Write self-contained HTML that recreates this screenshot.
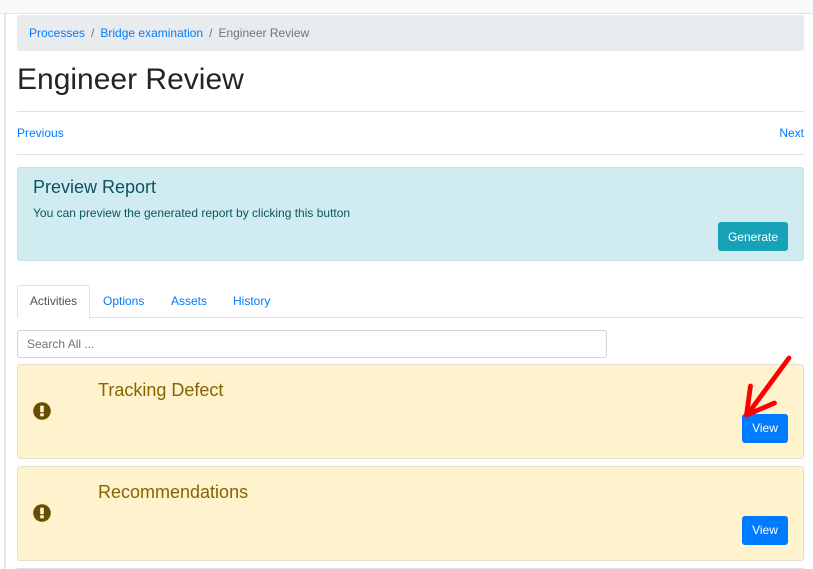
<!DOCTYPE html>
<html>
<head>
<meta charset="utf-8">
<style>
html,body{margin:0;padding:0;background:#fff;}
body{width:813px;height:569px;overflow:hidden;position:relative;font-family:"Liberation Sans",sans-serif;font-size:12px;color:#212529;}
.abs{position:absolute;white-space:nowrap;}
a{color:#007bff;text-decoration:none;}
.card{position:absolute;left:17px;width:785px;height:93px;background:#fff3cd;border:1px solid #e3e0d2;border-radius:3px;}
.title{position:absolute;left:80px;font-size:18px;line-height:22px;color:#856404;white-space:nowrap;}
.btn{position:absolute;left:724px;width:46px;height:29px;background:#007bff;border-radius:3px;color:#fff;text-align:center;line-height:28px;font-size:12px;}
.ico{position:absolute;left:15px;width:18px;height:18px;}
</style>
</head>
<body>
<div class="abs" style="left:0;top:0;width:813px;height:13px;background:#f8f9fa;border-bottom:1px solid #e3e4e6;"></div>
<div class="abs" style="left:4px;top:14px;width:2px;height:555px;background:#e4e5e7;"></div>

<div class="abs" style="left:17px;top:15px;width:787px;height:36px;background:#e9ecef;border-radius:3px;"></div>
<div class="abs" style="left:29px;top:26px;line-height:15px;color:#6c757d;"><a href="#">Processes</a><span style="margin:0 6px;">/</span><a href="#">Bridge examination</a><span style="margin:0 6px;">/</span>Engineer Review</div>

<div class="abs" style="left:17px;top:62px;font-size:30px;line-height:36px;color:#212529;">Engineer Review</div>
<div class="abs" style="left:17px;top:111px;width:787px;height:1px;background:#dfe0e1;"></div>
<a class="abs" href="#" style="left:17px;top:126px;line-height:15px;">Previous</a>
<a class="abs" href="#" style="right:9px;top:126px;line-height:15px;">Next</a>
<div class="abs" style="left:17px;top:154px;width:787px;height:1px;background:#dfe0e1;"></div>

<div class="abs" style="left:17px;top:167px;width:785px;height:92px;background:#d1ecf1;border:1px solid #bee5eb;border-radius:3px;"></div>
<div class="abs" style="left:33px;top:176px;font-size:18px;line-height:22px;color:#0c5460;">Preview Report</div>
<div class="abs" style="left:33px;top:206px;line-height:15px;color:#0c5460;">You can preview the generated report by clicking this button</div>
<div class="abs" style="left:718px;top:222px;width:70px;height:29px;background:#17a2b8;border-radius:3px;color:#fff;text-align:center;line-height:30px;">Generate</div>

<div class="abs" style="left:17px;top:317px;width:787px;height:1px;background:#dee2e6;"></div>
<div class="abs" style="left:17px;top:285px;width:71px;height:32px;background:#fff;border:1px solid #dee2e6;border-bottom:none;border-radius:3px 3px 0 0;text-align:center;line-height:30px;color:#495057;">Activities</div>
<a class="abs" href="#" style="left:103px;top:294px;line-height:15px;">Options</a>
<a class="abs" href="#" style="left:171px;top:294px;line-height:15px;">Assets</a>
<a class="abs" href="#" style="left:233px;top:294px;line-height:15px;">History</a>

<div class="abs" style="left:17px;top:330px;width:579px;height:26px;background:#fff;border:1px solid #ced4da;border-radius:3px;padding-left:9px;line-height:26px;color:#6c757d;">Search All ...</div>

<div class="card" style="top:364px;">
  <svg class="ico" style="top:37px;" viewBox="0 0 18 18"><circle cx="9" cy="9" r="8.8" fill="#664d03"/><rect x="7.2" y="3.6" width="3.6" height="6.6" rx=".7" fill="#fff3cd"/><rect x="7.2" y="11.2" width="3.6" height="3.2" rx=".7" fill="#fff3cd"/></svg>
  <div class="title" style="top:14px;">Tracking Defect</div>
  <div class="btn" style="top:49px;">View</div>
</div>
<div class="card" style="top:466px;">
  <svg class="ico" style="top:37px;" viewBox="0 0 18 18"><circle cx="9" cy="9" r="8.8" fill="#664d03"/><rect x="7.2" y="3.6" width="3.6" height="6.6" rx=".7" fill="#fff3cd"/><rect x="7.2" y="11.2" width="3.6" height="3.2" rx=".7" fill="#fff3cd"/></svg>
  <div class="title" style="top:14px;">Recommendations</div>
  <div class="btn" style="top:49px;">View</div>
</div>
<div class="abs" style="left:17px;top:568px;width:787px;height:1px;background:#dfdfdf;"></div>

<svg class="abs" style="left:0;top:0;" width="813" height="569" viewBox="0 0 813 569">
  <path d="M789 358L747 415M750.500 386L746.500 415L774.500 403" fill="none" stroke="#fe0000" stroke-width="4.800" stroke-linecap="round" stroke-linejoin="round"/>
</svg>
</body>
</html>
